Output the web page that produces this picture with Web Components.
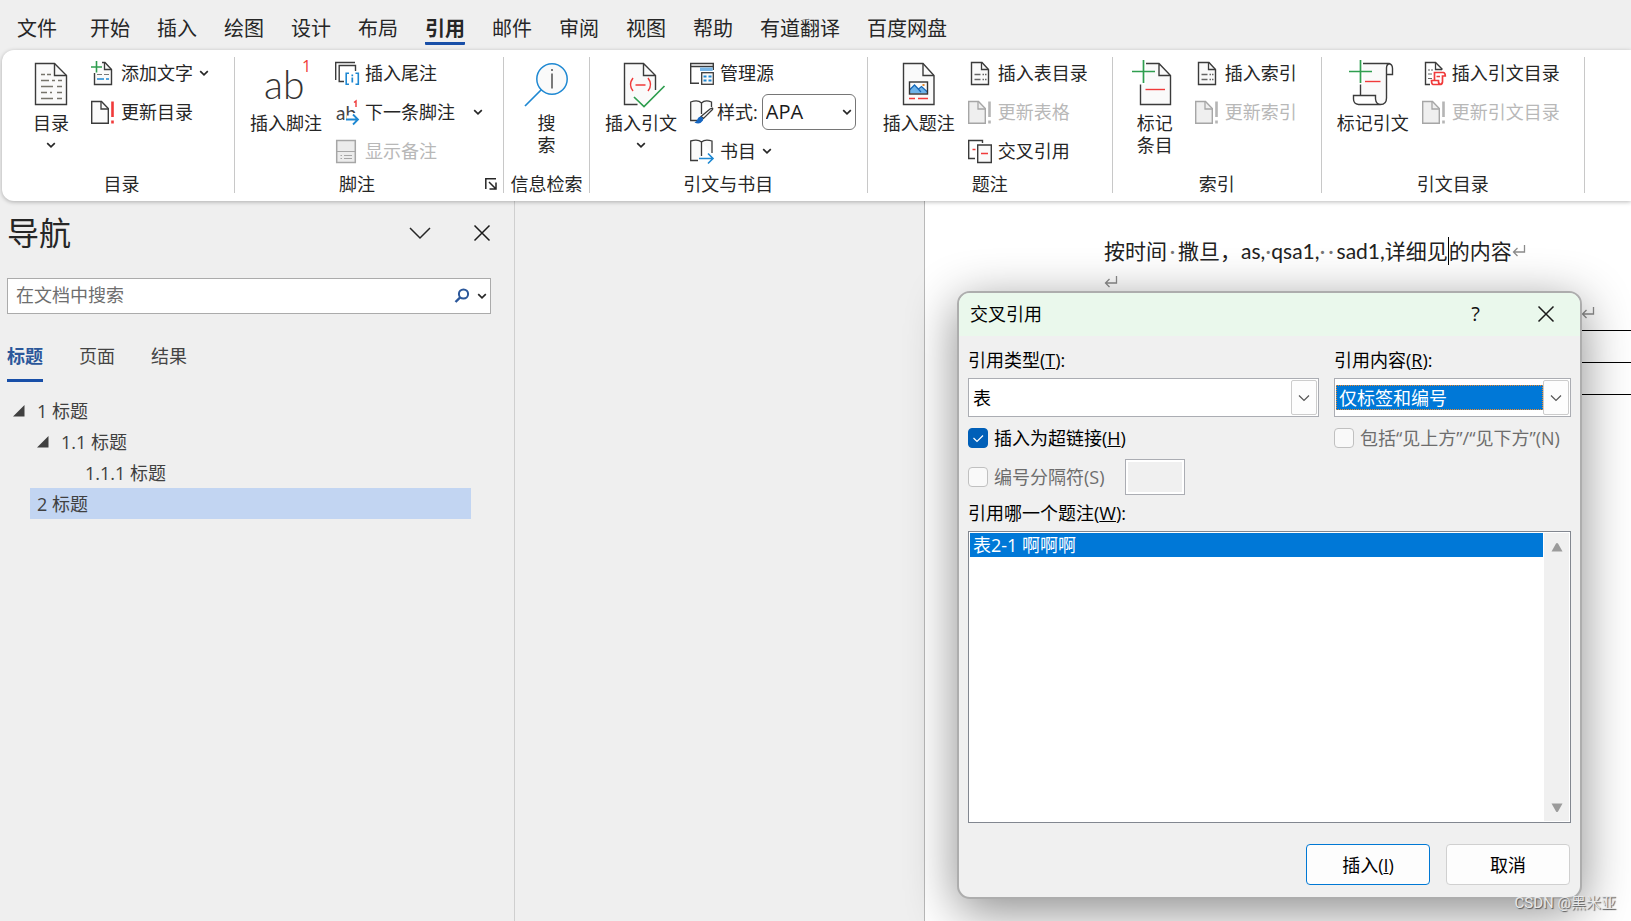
<!DOCTYPE html>
<html lang="zh-CN">
<head>
<meta charset="utf-8">
<title>Word - 引用</title>
<style>
  html, body { height: 100%; }
  body {
    margin: 0;
    background: #efefef;
    color: #262626;
    font: 18px/22px "Open Sans", "Noto Sans CJK SC", sans-serif;
    overflow: hidden;
  }
</style>
</head>
<body>
<word-window></word-window>

<script>
const DOC = '#3b3b3b', RED = '#f03a3a', BLUE = '#1e88d2', GREEN = '#2f9e4f', DIM = '#a6a6a6';

/* Icon artwork: [box size, markup] */
const ICONS = {
  toc: [48, `<path d="M8.5 3.5H27.5L39.5 15.5V44.5H8.5Z" fill="#fafafa" stroke="${DOC}" stroke-width="1.4"/><path d="M27.5 3.5V15.5H39.5" stroke="${DOC}" stroke-width="1.4"/><path d="M14 14.5h4m2 0h4M14 20.5h8m3 0h3m3 0h4M14 26.5h12m4 0h5M14 32.5h6m3 0h2m5 0h5M14 38.5h12m4 0h5" stroke="#77756c" stroke-width="1.3"/>`],
  footnote: [48, `<text x="2" y="39" font-family="Lato" font-weight="300" font-size="39" fill="#333">ab</text><text x="40" y="12" font-family="Open Sans" font-size="16" fill="${RED}">1</text>`],
  search: [48, `<circle cx="29" cy="19" r="15.2" fill="#fafafa" stroke="${BLUE}" stroke-width="1.5"/><path d="M18.5 29.5L2 46" stroke="${BLUE}" stroke-width="1.7"/><path d="M29 9v2M29 13.5V28.5" stroke="#444" stroke-width="1.4"/>`],
  citation: [48, `<path d="M38.5 30V15.5L26.5 3.5H7.5V44.5H21L18 38L27 44L38.5 32Z" fill="#fafafa"/><path d="M38.5 30V15.5L26.5 3.5H7.5V44.5H20.5M26.5 3.5V15.5H38.5" stroke="${DOC}" stroke-width="1.4"/><path d="M17 37l10 9.5L47.5 26" stroke="${GREEN}" stroke-width="1.7"/><path d="M16 18q-5 6.5 0 13M31 18q5 6.5 0 13M18.5 25h10" stroke="${RED}" stroke-width="1.5"/>`],
  caption: [48, `<path d="M8.5 3.5H28L39 15.5V44.5H8.5Z" fill="#fafafa" stroke="${DOC}" stroke-width="1.4"/><path d="M28 3.5V15.5H39" stroke="${DOC}" stroke-width="1.4"/><path d="M14.5 33.5V29l5-5 5 5 2-2 6 5v1.5z" fill="#6db3ea"/><path d="M14.5 30l5-5 6.5 7M23 29.5l3.5-3 6 5.5" stroke="#1565b5" stroke-width="1.2"/><rect x="14.5" y="22" width="18" height="12" stroke="#333" stroke-width="1.4"/><path d="M27.5 25h2" stroke="#e8892b" stroke-width="2"/><path d="M14 38.5h6m3 0h10" stroke="${RED}" stroke-width="1.5"/>`],
  markEntry: [48, `<path d="M15 3.5H28L39.5 15.5V44.5H9.5V24.5H15Z" fill="#fafafa"/><path d="M15 3.5H28L39.5 15.5V44.5H9.5V24.5M28 3.5V15.5H39.5" stroke="${DOC}" stroke-width="1.4"/><path d="M12.5 0V23M1 11.5H24" stroke="${GREEN}" stroke-width="1.7"/><path d="M14.5 29.5H34" stroke="${RED}" stroke-width="1.4"/>`],
  markCitation: [48, `<path d="M14 4H38V40L32 44L24 36H12V24H14Z" fill="#fafafa"/><path d="M14 3.5H39.5Q43.5 4 43.5 8.5V14.5H37.5M41 3.5Q37.5 4 37.5 8V38Q37.5 44.5 31.5 44.5H9.5Q4.5 44 4.5 39V35.5H26.5V39Q27 44.5 32 44.5M11.5 24.5V35.5" stroke="${DOC}" stroke-width="1.4"/><path d="M11.5 0V23M0 11.5H23" stroke="${GREEN}" stroke-width="1.7"/><path d="M16 21.5H31.5" stroke="${RED}" stroke-width="1.4"/>`],

  addText: [24, `<path d="M11 1.5H14L20.5 8.5V23.5H3.5V12" fill="#fafafa" stroke="${DOC}" stroke-width="1.4"/><path d="M13.5 1.5V8.5H20.5" stroke="${DOC}" stroke-width="1.3"/><path d="M6 13.5h5m2 0h5" stroke="#777" stroke-width="1.2"/><path d="M6 18h7m2 0h3" stroke="${BLUE}" stroke-width="1.5"/><path d="M5.5 0V11.5M0 6H11" stroke="${GREEN}" stroke-width="1.6"/>`],
  update: [24, `<path d="M.7 1.5H10.5L17.3 8.5V23.3H.7Z" fill="#fafafa" stroke="${DOC}" stroke-width="1.4"/><path d="M10 1.5V9H17" stroke="${DOC}" stroke-width="1.3"/><path d="M21.5 1.5V17M21.5 20.5V23.5" stroke="${RED}" stroke-width="2.6"/>`],
  updateDim: [24, `<path d="M.7 1.5H10.5L17.3 8.5V23.3H.7Z" fill="#efefef" stroke="${DIM}" stroke-width="1.4"/><path d="M10 1.5V9H17" stroke="${DIM}" stroke-width="1.3"/><path d="M21.5 1.5V17M21.5 20.5V23.5" stroke="#b5b5b5" stroke-width="2.6"/>`],
  endnote: [24, `<path d="M.7 19V1.5H20M20.5 10V4.5H4.2V20.5H9" stroke="${DOC}" stroke-width="1.4"/><path d="M14 12.2H11.2V23.3H14M20.5 12.2H23.3V23.3H20.5" stroke="${BLUE}" stroke-width="1.6"/><path d="M17.3 13.5v1.8M17.3 16.5V21.5" stroke="${BLUE}" stroke-width="1.7"/>`],
  nextNote: [24, `<text x="1" y="20" font-family="Lato" font-weight="400" font-size="19" fill="#444">ab</text><path d="M12 15.5H17V13H24V24H12Z" fill="#fff"/><path d="M11 19.5H23M18 14.5L23 19.5L18 24.5" stroke="${BLUE}" stroke-width="1.8"/><path d="M19 2.5L21 1V7" stroke="${RED}" stroke-width="1.4"/>`],
  notes: [24, `<path d="M1.7 1.5H20.3V23.5H1.7Z" fill="#ececec" stroke="${DIM}" stroke-width="1.5"/><path d="M1.7 12.5H20.3M5.5 16.5h1.5m2 0h8M5.5 19.5h1.5m2 0h8" stroke="${DIM}" stroke-width="1.2"/>`],
  sources: [24, `<path d="M9 22.3H.7V2.5H23.3V9M.7 5.5H23.3" fill="none" stroke="${DOC}" stroke-width="1.4"/><path d="M10 6.5H22.6V10H10Z" fill="#77b6e8"/><rect x="11.7" y="11.7" width="11.6" height="11.6" fill="#fafafa" stroke="${DOC}" stroke-width="1.3"/><path d="M13.5 15.5h3m2 0h3M13.5 19.5h3m2 0h3" stroke="${BLUE}" stroke-width="2.2"/>`],
  style: [24, `<path d="M7 20.5H.7V2Q8-.5 11.5 3V14M11.5 3Q15-.5 21.5 2V7" fill="#fafafa" stroke="${DOC}" stroke-width="1.3"/><path d="M22.5 9.5L13.5 18.5L11 16.5L20 9Q23.5 7 22.5 9.5Z" fill="#f8f8f8" stroke="${DOC}" stroke-width="1.3"/><path d="M10.5 16.5Q14 17.5 13 20.5Q10 25 4.5 22.5Q7 21.5 7.5 19Q8.5 16.5 10.5 16.5Z" fill="#1565c0"/>`],
  biblio: [24, `<path d="M8 21.5H.7V2Q8 0 11.5 3V17M11.5 3Q15 0 22 2V14" fill="#fafafa" stroke="${DOC}" stroke-width="1.3"/><path d="M9 19.5H23M18 14.5L23 19.5L18 24.5" stroke="${BLUE}" stroke-width="1.6"/>`],
  list: [24, `<path d="M3.5 1.5H14L20.5 8.5V23.5H3.5Z" fill="#fafafa" stroke="${DOC}" stroke-width="1.4"/><path d="M13.5 1.5V8.5H20.5" stroke="${DOC}" stroke-width="1.3"/><path d="M6.5 13.5h6m2 0h1.5m1 0h1.5M6.5 18.5h6m2 0h1.5m1 0h1.5" stroke="#666" stroke-width="1.3"/>`],
  crossRef: [24, `<path d="M7 19.5H.7V1.5H14.5V4" fill="none" stroke="${DOC}" stroke-width="1.4"/><path d="M9.7 6H23.3V23.5H9.7Z" fill="#fafafa" stroke="${DOC}" stroke-width="1.4"/><path d="M4.5 10.5h3M13 14.5h7" stroke="${RED}" stroke-width="1.5"/>`],
  authorities: [24, `<path d="M8 23.5H3.5V1.5H13.5L20.5 8.5" fill="none" stroke="${DOC}" stroke-width="1.4"/><path d="M13.5 1.5V8.5H20" stroke="${DOC}" stroke-width="1.3"/><path d="M6 9h2m1 0h2M6 13h4M6 17.5h4" stroke="#666" stroke-width="1.2"/><path d="M12.5 19.5V11.5H21.5Q23.3 12 23.3 15H20.5V21Q20 23.5 18 23.5H11Q9.5 23 9.5 19.5H16.5V21Q17 23.5 18.5 23.5M14.5 15.5H18" stroke="${RED}" stroke-width="1.7"/>`],

  chevron: [10, `<path d="M1.2 3.2L5 6.8L8.8 3.2" stroke="#262626" stroke-width="1.7"/>`],
  launcher: [12, `<path d="M.8 11V.8H11M4 4L10.5 10.5M11 4.5V11H4.5" stroke="#262626" stroke-width="1.5"/>`],
  paneDown: [22, `<path d="M1 6L11 16L21 6" stroke="#262626" stroke-width="1.5"/>`],
  close: [18, `<path d="M1.5 1.5L16.5 16.5M16.5 1.5L1.5 16.5" stroke="#1a1a1a" stroke-width="1.5"/>`],
  find: [16, `<circle cx="9.5" cy="6" r="4.6" stroke="#2b579a" stroke-width="2"/><path d="M6.2 9.3L1.5 14" stroke="#2b579a" stroke-width="2.4"/>`],
  twisty: [12, `<path d="M11.5 0V11.5H0Z" fill="#404040"/>`],
  comboDown: [12, `<path d="M1 3.5L6 8.5L11 3.5" stroke="#555" stroke-width="1.2"/>`],
  up: [12, `<path d="M5 1.5Q6 .5 7 1.5L11.5 9.5H.5Z" fill="#9b9b9b"/>`],
  down: [12, `<path d="M5 9.5Q6 10.5 7 9.5L11.5 1.5H.5Z" fill="#9b9b9b"/>`],
  returnMark: [14, `<path d="M12.5 1V8H2M5.5 4L1.5 8L5.5 12" stroke="#8b8b8b" stroke-width="1.3"/>`],
};

function makeIcon(name) {
  const icon = document.createElement('office-icon');
  icon.setAttribute('name', name);
  return icon;
}

function define(name, html, setup) {
  const template = document.createElement('template');
  template.innerHTML = html;
  customElements.define(name, class extends HTMLElement {
    connectedCallback() {
      if (this.shadowRoot) return;
      const root = this.attachShadow({ mode: 'open' });
      root.append(template.content.cloneNode(true));
      if (setup) setup(this, root);
    }
  });
}

define('office-icon', `<style>:host{display:block;flex:none}svg{display:block;fill:none;overflow:visible}</style>`, (host, root) => {
  const [size, art] = ICONS[host.getAttribute('name')];
  const holder = document.createElement('template');
  holder.innerHTML = `<svg width="${size}" height="${size}" viewBox="0 0 ${size} ${size}" fill="none" aria-hidden="true">${art}</svg>`;
  root.append(holder.content);
});

define('ribbon-tabs', `
<style>
  :host { display: block; }
  nav { display: flex; gap: 27px; padding: 5px 17px 0; height: 45px; box-sizing: border-box; }
  a { display: block; height: 40px; box-sizing: border-box; color: #262626; text-decoration: none; font-size: 20px; line-height: 47px; white-space: nowrap; }
  a:first-child { margin-right: 6px; }
  a[aria-current] { font-weight: 700; border-bottom: 3px solid #184fa8; border-radius: 1px; }
</style>
<nav aria-label="功能区">
  <a href="#file">文件</a><a href="#home">开始</a><a href="#insert">插入</a><a href="#draw">绘图</a><a href="#design">设计</a><a href="#layout">布局</a><a href="#references" aria-current="page">引用</a><a href="#mail">邮件</a><a href="#review">审阅</a><a href="#view">视图</a><a href="#help">帮助</a><a href="#youdao">有道翻译</a><a href="#baidu">百度网盘</a>
</nav>`);

define('big-button', `
<style>
  :host { display: block; min-width: 54px; }
  button { display: flex; flex-direction: column; align-items: center; width: 100%; padding: 0; border: 0; background: none; font: inherit; color: inherit; white-space: nowrap; }
  span { display: block; margin-top: 4px; }
  office-icon[name=chevron] { margin-top: 6px; }
</style>
<button type="button"><span><slot></slot></span></button>`, (host, root) => {
  const button = root.querySelector('button');
  button.prepend(makeIcon(host.getAttribute('icon')));
  if (host.hasAttribute('menu')) button.append(makeIcon('chevron'));
});

define('small-button', `
<style>
  :host { display: block; }
  button { display: flex; align-items: center; gap: 6px; height: 24px; padding: 0; border: 0; background: none; font: inherit; color: inherit; white-space: nowrap; }
  button:disabled { color: #b8b8b8; }
  :host([wide]) office-icon[name=chevron] { margin-left: 12px; }
</style>
<button type="button"><span><slot></slot></span></button>`, (host, root) => {
  const button = root.querySelector('button');
  button.prepend(makeIcon(host.getAttribute('icon')));
  button.disabled = host.hasAttribute('disabled');
  if (host.hasAttribute('menu')) button.append(makeIcon('chevron'));
});

define('style-picker', `
<style>
  :host { display: flex; align-items: center; height: 24px; gap: 4px; }
  label { display: flex; align-items: center; gap: 3px; white-space: nowrap; }
  .box { position: relative; }
  select { appearance: none; display: block; width: 94px; height: 36px; padding: 0 3px; border: 1px solid #767676; border-radius: 6px; background: #fff; color: #1a1a1a; font: inherit; font-size: 20px; }
  .box office-icon { position: absolute; right: 4px; top: 13px; pointer-events: none; }
</style>
<label for="style"><office-icon name="style"></office-icon>样式:</label>
<div class="box"><select id="style"><option>APA</option></select><office-icon name="chevron"></office-icon></div>`);

define('ribbon-group', `
<style>
  :host { display: flex; flex-direction: column; box-sizing: border-box; height: 136px; border-right: 1px solid #c8c8c8; }
  .tools { display: flex; flex: none; gap: 13px; height: 118px; box-sizing: border-box; padding: 3px var(--end, 24px) 0 15px; }
  :host([single]) { width: 86px; }
  :host([single]) .tools { justify-content: center; padding: 3px 0 0; }
  .column { display: flex; flex-direction: column; gap: 15px; padding-top: 1px; }
  :host([single]) .column { display: none; }
  footer { display: flex; flex: none; align-items: center; height: 18px; line-height: 18px; padding: 0 6px; }
  .label { flex: 1; text-align: center; white-space: nowrap; }
  button { display: block; padding: 0 0 0 12px; border: 0; background: none; }
</style>
<div class="tools"><slot name="big"></slot><div class="column"><slot></slot></div></div>
<footer><span class="label"></span></footer>`, (host, root) => {
  root.querySelector('.label').textContent = host.getAttribute('label');
  if (host.hasAttribute('launcher')) {
    const button = document.createElement('button');
    button.type = 'button';
    button.setAttribute('aria-label', host.getAttribute('label'));
    button.append(makeIcon('launcher'));
    root.querySelector('footer').append(button);
  }
});

define('word-ribbon', `
<style>
  :host { display: flex; box-sizing: border-box; height: 151px; margin: 5px 0 0 2px; padding: 7px 0 0 7px; background: #fff; border-radius: 12px 0 0 12px; box-shadow: 0 1px 4px rgba(0,0,0,.28); position: relative; z-index: 1; }
  .toc { --end: 25px; } .notes { --end: 20px; } .cite { --end: 11px; }
</style>
<ribbon-group label="目录" class="toc">
  <big-button slot="big" icon="toc" menu>目录</big-button>
  <small-button icon="addText" menu>添加文字</small-button>
  <small-button icon="update">更新目录</small-button>
</ribbon-group>
<ribbon-group label="脚注" class="notes" launcher>
  <big-button slot="big" icon="footnote">插入脚注</big-button>
  <small-button icon="endnote">插入尾注</small-button>
  <small-button icon="nextNote" menu wide>下一条脚注</small-button>
  <small-button icon="notes" disabled>显示备注</small-button>
</ribbon-group>
<ribbon-group label="信息检索" single>
  <big-button slot="big" icon="search">搜<br>索</big-button>
</ribbon-group>
<ribbon-group label="引文与书目" class="cite">
  <big-button slot="big" icon="citation" menu>插入引文</big-button>
  <small-button icon="sources">管理源</small-button>
  <style-picker></style-picker>
  <small-button icon="biblio" menu>书目</small-button>
</ribbon-group>
<ribbon-group label="题注">
  <big-button slot="big" icon="caption">插入题注</big-button>
  <small-button icon="list">插入表目录</small-button>
  <small-button icon="updateDim" disabled>更新表格</small-button>
  <small-button icon="crossRef">交叉引用</small-button>
</ribbon-group>
<ribbon-group label="索引">
  <big-button slot="big" icon="markEntry">标记<br>条目</big-button>
  <small-button icon="list">插入索引</small-button>
  <small-button icon="updateDim" disabled>更新索引</small-button>
</ribbon-group>
<ribbon-group label="引文目录">
  <big-button slot="big" icon="markCitation">标记引文</big-button>
  <small-button icon="authorities">插入引文目录</small-button>
  <small-button icon="updateDim" disabled>更新引文目录</small-button>
</ribbon-group>`);

define('tree-row', `
<style>
  :host { display: flex; align-items: center; height: 31px; margin-left: 30px; padding-left: calc(7px + var(--depth, 0) * 24px); color: #404040; }
  :host([selected]) { background: #c2d5f2; }
  .twist { width: 24px; margin-left: -24px; }
</style>
<span class="twist"></span><span><slot></slot></span>`, (host, root) => {
  host.style.setProperty('--depth', host.getAttribute('depth') || 0);
  if (host.hasAttribute('open')) root.querySelector('.twist').append(makeIcon('twisty'));
});

define('nav-pane', `
<style>
  :host { display: block; box-sizing: border-box; width: 515px; flex: none; padding: 9px 23px 0 7px; border-right: 1px solid #cfcfcf; }
  button { padding: 0; border: 0; background: none; font: inherit; color: inherit; display: block; }
  header { display: flex; align-items: center; height: 46px; padding-bottom: 10px; margin-bottom: 12px; }
  h2 { flex: 1; margin: 0; font-size: 32px; line-height: 48px; font-weight: 400; }
  header button + button { margin-left: 42px; }
  .search { display: flex; align-items: center; gap: 7px; height: 36px; box-sizing: border-box; border: 1px solid #ababab; background: #fff; padding: 0 3px 0 8px; }
  input { flex: 1; min-width: 0; height: 30px; padding: 0 0 3px; box-sizing: border-box; border: 0; outline: 0; background: none; font: inherit; color: #262626; }
  input::placeholder { color: #6e6e6e; opacity: 1; }
  .tabs { display: flex; gap: 36px; margin: 30px 0 13px; }
  .tabs button { height: 38px; line-height: 24px; padding-bottom: 11px; box-sizing: border-box; border-bottom: 3px solid transparent; color: #444; }
  .tabs button[aria-selected=true] { color: #2b579a; font-weight: 700; border-color: #184fa8; }
  .tree { margin-right: 20px; margin-left: -7px; }
</style>
<header><h2>导航</h2>
  <button type="button" aria-label="任务窗格选项"><office-icon name="paneDown"></office-icon></button>
  <button type="button" aria-label="关闭"><office-icon name="close"></office-icon></button>
</header>
<div class="search"><input type="text" aria-label="在文档中搜索" placeholder="在文档中搜索">
  <button type="button" aria-label="搜索"><office-icon name="find"></office-icon></button>
  <button type="button" aria-label="搜索选项"><office-icon name="chevron"></office-icon></button>
</div>
<div class="tabs" role="tablist">
  <button type="button" role="tab" aria-selected="true">标题</button>
  <button type="button" role="tab" aria-selected="false">页面</button>
  <button type="button" role="tab" aria-selected="false">结果</button>
</div>
<div class="tree">
  <tree-row open>1 标题</tree-row>
  <tree-row open depth="1">1.1 标题</tree-row>
  <tree-row depth="2">1.1.1 标题</tree-row>
  <tree-row selected>2 标题</tree-row>
</div>`);

define('doc-page', `
<style>
  :host { display: block; flex: 1; background: #fff; border-left: 1px solid #b9b9b9; padding: 34px 0 0 179px; overflow: hidden; color: #222; font: 21px/31px Lato, "Noto Sans CJK SC", sans-serif; }
  p { display: flex; align-items: center; height: 31px; margin: 0; white-space: pre; }
  i { font-style: normal; color: #777; text-align: center; width: 6px; }
  .wide { width: 11px; }
  .caret { width: 1px; height: 28px; background: #000; }
  .tail { padding-left: 477px; }
  table { width: 100%; margin-top: 2px; border-collapse: collapse; }
  td { height: 31px; padding: 0; border: solid #000; border-width: 1px 0; }
</style>
<p><span>按时间</span><i class="wide">·</i><span>撒旦，</span><span>as,</span><i>·</i><span>qsa1,</span><i>·</i><i class="wide">·</i><span>sad1,详细见</span><span class="caret"></span><span>的内容</span><office-icon name="returnMark"></office-icon></p>
<p><office-icon name="returnMark"></office-icon></p>
<p class="tail"><office-icon name="returnMark"></office-icon></p>
<table><tr><td></td></tr><tr><td></td></tr></table>`);

define('combo-box', `
<style>
  :host { display: flex; flex-direction: column; gap: 6px; }
  label { line-height: 24px; color: #000; }
  .frame { display: flex; position: relative; height: 39px; box-sizing: border-box; padding: 6px 1px; border: 1px solid #abadb3; background: #fff; }
  select { appearance: none; flex: 1; min-width: 0; padding: 0 3px; border: 0; border-radius: 0; outline: 0; background: #fff; color: #000; font: inherit; line-height: 24px; margin-right: 26px; }
  :host([active]) select { background: #0078d7; color: #fff; border: 1px dotted #f08a28; padding: 0 2px; }
  .drop { position: absolute; right: 1px; top: 1px; bottom: 1px; width: 26px; box-sizing: border-box; display: grid; place-items: center; border: 1px solid #ccc; border-radius: 2px; background: #fdfdfd; pointer-events: none; }
</style>
<label for="choice"><slot></slot></label>
<div class="frame"><select id="choice"><option></option></select><span class="drop"><office-icon name="comboDown"></office-icon></span></div>`, (host, root) => {
  root.querySelector('option').textContent = host.getAttribute('value');
});

define('check-box', `
<style>
  :host { display: flex; align-items: center; gap: 6px; height: 24px; }
  input { appearance: none; box-sizing: border-box; display: block; flex: none; width: 20px; height: 20px; margin: 0; border: 1px solid #c0c0c0; border-radius: 4px; background: #f9f9f9; }
  input:checked { border-color: #005fb8; background: #005fb8; }
  .mark { position: relative; }
  svg { position: absolute; left: 0; top: 0; display: none; pointer-events: none; }
  input:checked + svg { display: block; }
  label { color: #000; white-space: nowrap; }
  :host([disabled]) label { color: #6d6d6d; }
</style>
<span class="mark"><input type="checkbox" id="box"><svg width="20" height="20" fill="none" stroke="#fff" stroke-width="1.2"><path d="M5.5 10L9 13.5L15 7.5"/></svg></span><label for="box"><slot></slot></label>`, (host, root) => {
  const input = root.querySelector('input');
  input.checked = host.hasAttribute('checked');
  input.disabled = host.hasAttribute('disabled');
});

define('crossref-dialog', `
<style>
  :host { display: flex; flex-direction: column; box-sizing: border-box; width: 625px; height: 608px; border: 2px solid #adadad; border-radius: 13px; background: #f0f0f0; overflow: hidden; box-shadow: 0 12px 50px rgba(0,0,0,.46); color: #000; }
  header { display: flex; align-items: center; height: 43px; padding: 0 25px 2px 11px; box-sizing: border-box; background: #eaf8ec; }
  h2 { flex: 1; margin: 0; font: inherit; }
  header button { padding: 0; border: 0; background: none; font: inherit; font-size: 20px; color: #111; }
  header button + button { margin-left: 57px; }
  form { flex: 1; display: flex; flex-direction: column; padding: 12px 9px 12px; }
  .pair { display: grid; grid-template-columns: 351px 1fr; column-gap: 15px; row-gap: 9px; }
  .separator { display: flex; align-items: center; gap: 20px; height: 36px; margin-top: 9px; }
  .separator input { width: 60px; height: 36px; box-sizing: border-box; border: 1px solid #abadb3; background: #f0f0f0; box-shadow: inset 0 0 0 2px #fff; padding: 0 4px; }
  .caption { margin: 6px 0; line-height: 24px; }
  .list { flex: 1; display: flex; box-sizing: border-box; border: 1px solid #828790; background: #fff; padding: 1px; }
  ul { flex: 1; margin: 0; padding: 0; list-style: none; }
  li { height: 24px; line-height: 24px; padding: 0 3px; background: #0078d7; color: #fff; }
  .bar { display: flex; flex-direction: column; justify-content: space-between; align-items: center; width: 25px; margin-left: 1px; padding: 9px 0 7px; box-sizing: border-box; background: #f0f0f0; }
  .actions { display: flex; justify-content: flex-end; gap: 16px; margin-top: 21px; padding-right: 1px; }
  .actions button { width: 124px; height: 41px; border: 1px solid #d0d0d0; border-radius: 4px; background: #fdfdfd; font: inherit; color: #000; }
  .actions .default { border-color: #0078d4; }
</style>
<header><h2>交叉引用</h2><button type="button">?</button><button type="button" aria-label="关闭"><office-icon name="close"></office-icon></button></header>
<form>
  <div class="pair">
    <combo-box value="表">引用类型(<u>T</u>):</combo-box>
    <combo-box value="仅标签和编号" active>引用内容(<u>R</u>):</combo-box>
    <check-box checked>插入为超链接(<u>H</u>)</check-box>
    <check-box disabled>包括“见上方”/“见下方”(N)</check-box>
  </div>
  <div class="separator"><check-box disabled>编号分隔符(S)</check-box><input type="text" aria-label="编号分隔符" disabled></div>
  <div class="caption" id="caption">引用哪一个题注(<u>W</u>):</div>
  <div class="list"><ul role="listbox" aria-labelledby="caption"><li role="option" aria-selected="true">表2-1 啊啊啊</li></ul>
    <div class="bar"><office-icon name="up"></office-icon><office-icon name="down"></office-icon></div></div>
  <div class="actions"><button type="button" class="default">插入(<u>I</u>)</button><button type="button">取消</button></div>
</form>`);

define('word-window', `
<style>
  :host { display: flex; flex-direction: column; min-height: 100vh; position: relative; overflow: hidden; }
  main { flex: 1; display: flex; position: relative; }
  .desk { flex: 1; display: flex; padding-left: 409px; }
  crossref-dialog { position: absolute; left: 957px; top: 90px; }
  .mark { position: absolute; right: 15px; bottom: 6px; font: 15px/24px Roboto, "Noto Sans CJK SC", sans-serif; color: #e8e8e8; text-shadow: 1px 1px 1px #555; }
</style>
<ribbon-tabs></ribbon-tabs>
<word-ribbon></word-ribbon>
<main><nav-pane></nav-pane><div class="desk"><doc-page></doc-page></div><crossref-dialog></crossref-dialog></main>
<div class="mark">CSDN @黑米亚</div>`);
</script>
</body>
</html>
